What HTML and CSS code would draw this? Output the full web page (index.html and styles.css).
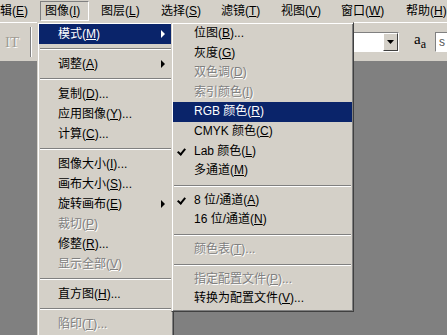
FILE: index.html
```html
<!DOCTYPE html>
<html lang="zh-CN">
<head>
<meta charset="UTF-8">
<title>图像 - 模式</title>
<link rel="stylesheet" href="styles.css">
</head>
<body>
<div class="app">
    <div class="menubar">
        <span class="mb-item first">编辑(<u>E</u>)</span>
        <span class="mb-item open">图像(<u>I</u>)</span>
        <span class="mb-item">图层(<u>L</u>)</span>
        <span class="mb-item">选择(<u>S</u>)</span>
        <span class="mb-item">滤镜(<u>T</u>)</span>
        <span class="mb-item">视图(<u>V</u>)</span>
        <span class="mb-item wide">窗口(<u>W</u>)</span>
        <span class="mb-item">帮助(<u>H</u>)</span>
    </div>
    <div class="optionbar">
        <span class="tool-icon">IT</span>
        <span class="etch"></span>
        <div class="combo">
            <span class="combo-field"></span>
            <span class="combo-btn"><svg width="7" height="4" viewBox="0 0 7 4"><polygon points="0,0 7,0 3.5,4" fill="#000"/></svg></span>
        </div>
        <span class="aa-label">a<small>a</small></span>
        <span class="size-field">s</span>
    </div>
    <div class="workspace"></div>

    <!-- 图像 menu -->
    <div class="menu menu-image">
        <div class="item active has-sub">模式(<u>M</u>)</div>
        <div class="sep"></div>
        <div class="item has-sub">调整(<u>A</u>)</div>
        <div class="sep"></div>
        <div class="item">复制(<u>D</u>)...</div>
        <div class="item">应用图像(<u>Y</u>)...</div>
        <div class="item">计算(<u>C</u>)...</div>
        <div class="sep"></div>
        <div class="item">图像大小(<u>I</u>)...</div>
        <div class="item">画布大小(<u>S</u>)...</div>
        <div class="item has-sub">旋转画布(<u>E</u>)</div>
        <div class="item disabled">裁切(<u>P</u>)</div>
        <div class="item">修整(<u>R</u>)...</div>
        <div class="item disabled">显示全部(<u>V</u>)</div>
        <div class="sep"></div>
        <div class="item">直方图(<u>H</u>)...</div>
        <div class="sep"></div>
        <div class="item disabled">陷印(<u>T</u>)...</div>
    </div>

    <!-- 模式 submenu -->
    <div class="menu menu-mode">
        <div class="item">位图(<u>B</u>)...</div>
        <div class="item">灰度(<u>G</u>)</div>
        <div class="item disabled">双色调(<u>D</u>)</div>
        <div class="item disabled">索引颜色(<u>I</u>)</div>
        <div class="item active">RGB 颜色(<u>R</u>)</div>
        <div class="item">CMYK 颜色(<u>C</u>)</div>
        <div class="item checked">Lab 颜色(<u>L</u>)</div>
        <div class="item">多通道(<u>M</u>)</div>
        <div class="sep"></div>
        <div class="item checked">8 位/通道(<u>A</u>)</div>
        <div class="item">16 位/通道(<u>N</u>)</div>
        <div class="sep"></div>
        <div class="item disabled">颜色表(<u>T</u>)...</div>
        <div class="sep"></div>
        <div class="item disabled">指定配置文件(<u>P</u>)...</div>
        <div class="item">转换为配置文件(<u>V</u>)...</div>
    </div>
</div>
</body>
</html>
```

FILE: styles.css
```css
* { box-sizing: border-box; }
body {
    margin: 0;
    font-family: Tahoma, "Liberation Sans", "Noto Sans CJK SC", sans-serif;
    font-size: 12px;
    color: #000;
}
u { text-decoration: underline; text-underline-offset: 1px; }

.app {
    position: relative;
    width: 447px;
    height: 335px;
    overflow: hidden;
    display: flex;
    flex-direction: column;
    background: #d4d0c8;
}

/* menu bar */
.menubar {
    height: 22px;
    display: flex;
    align-items: center;
    white-space: nowrap;
}
.mb-item {
    flex: none;
    width: 60px;
    height: 20px;
    line-height: 19px;
    padding-left: 11px;
    border: 1px solid transparent;
}
.mb-item.first { margin-left: -13px; width: 53px; padding-left: 0; }
.mb-item.open {
    width: 49px;
    padding-left: 4px;
    border-color: #808080 #fff #fff #808080;
}
.mb-item.wide { width: 65px; }

/* options bar */
.optionbar {
    height: 40px;
    display: flex;
    align-items: center;
    border-top: 1px solid #fff;
    border-bottom: 1px solid #808080;
}
.optionbar > * { flex: none; }
.tool-icon {
    width: 30px;
    padding-left: 5px;
    font-family: "Liberation Serif", serif;
    font-size: 15px;
    color: #a09c94;
    text-shadow: 1px 1px #fff;
}
.etch {
    width: 2px;
    height: 30px;
    border-left: 1px solid #808080;
    border-right: 1px solid #fff;
}
.combo {
    margin-left: 268px;
    display: flex;
    width: 99px;
    height: 20px;
    border: 1px solid;
    border-color: #808080 #fff #fff #808080;
    background: #fff;
}
.combo-field { flex: 1; }
.combo-btn {
    width: 15px;
    display: flex;
    align-items: center;
    justify-content: center;
    background: #d4d0c8;
    border: 1px solid;
    border-color: #fff #404040 #404040 #fff;
}
.aa-label {
    margin-left: 15px;
    font-family: "Liberation Serif", serif;
    font-size: 15px;
    line-height: 15px;
    margin-top: -4px;
}
.aa-label small { font-size: 12px; position: relative; top: 4px; }
.size-field {
    margin-left: 9px;
    width: 30px;
    height: 20px;
    padding-left: 3px;
    line-height: 18px;
    background: #fff;
    border: 1px solid;
    border-color: #808080 #fff #fff #808080;
    color: #555;
}
.workspace {
    flex: 1;
    background: #808080;
}

/* drop-down menus */
.menu {
    position: absolute;
    top: 22px;
    background: #d4d0c8;
    border: 1px solid;
    border-color: #d4d0c8 #404040 #404040 #d4d0c8;
    box-shadow: inset 1px 1px #fff, inset -1px -1px #808080;
    padding: 1px 1px 2px;
    white-space: nowrap;
}
.menu-image { left: 37px; width: 137px; }
.menu-mode { left: 171px; width: 183px; }

.item {
    position: relative;
    height: 20px;
    line-height: 20px;
    padding-left: 19px;
}
.menu-mode .item { padding-left: 21px; height: 19.6px; line-height: 19.6px; }
.item.active { background: #0a246a; color: #fff; }
.item.disabled { color: #808080; text-shadow: 1px 1px #fff; }
.item.has-sub::after {
    content: "";
    position: absolute;
    right: 7px;
    top: 6px;
    border-left: 4px solid #000;
    border-top: 4px solid transparent;
    border-bottom: 4px solid transparent;
}
.item.active.has-sub::after { border-left-color: #fff; }
.item.checked::before {
    content: "";
    position: absolute;
    left: 6px;
    top: 5px;
    width: 3px;
    height: 6px;
    border: solid #000;
    border-width: 0 2px 2px 0;
    transform: rotate(40deg);
}
.sep {
    margin: 4px 1px;
    border-top: 1px solid #808080;
    border-bottom: 1px solid #fff;
}
```
